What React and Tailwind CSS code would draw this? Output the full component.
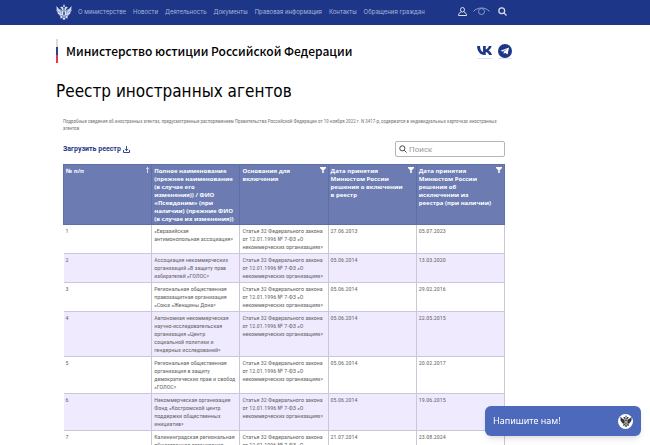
import { useState } from "react";

const navLinks = [
  "О министерстве",
  "Новости",
  "Деятельность",
  "Документы",
  "Правовая информация",
  "Контакты",
  "Обращения граждан",
];

const columns = [
  { title: "№ п/п", icon: "sort" },
  {
    title:
      "Полное наименование (прежнее наименование (в случае его\nизменения)) / ФИО «Псевдоним» (при наличии) (прежние ФИО (в случае их изменения))",
  },
  { title: "Основания для включения", icon: "filter" },
  {
    title: "Дата принятия Минюстом России решения о включении в реестр",
    icon: "filter",
  },
  {
    title:
      "Дата принятия Минюстом России решения об исключении из реестра (при наличии)",
    icon: "filter",
  },
];

const basis =
  "Статья 32 Федерального закона от 12.01.1996 № 7-ФЗ «О некоммерческих организациях»";

const agents = [
  {
    name: "«Евразийская\nантимонопольная ассоциация»",
    included: "27.06.2013",
    excluded: "05.07.2023",
  },
  {
    name: "Ассоциация некоммерческих организаций «В защиту прав избирателей «ГОЛОС»",
    included: "05.06.2014",
    excluded: "13.03.2020",
  },
  {
    name: "Региональная общественная правозащитная организация «Союз «Женщины Дона»",
    included: "05.06.2014",
    excluded: "29.02.2016",
  },
  {
    name: "Автономная некоммерческая научно-исследовательская организация «Центр\nсоциальной политики и гендерных исследований»",
    included: "05.06.2014",
    excluded: "22.05.2015",
  },
  {
    name: "Региональная общественная организация в защиту демократических прав и свобод «ГОЛОС»",
    included: "05.06.2014",
    excluded: "20.02.2017",
  },
  {
    name: "Некоммерческая организация Фонд «Костромской центр поддержки общественных инициатив»",
    included: "05.06.2014",
    excluded: "19.06.2015",
  },
  {
    name: "Калининградская региональная общественная организация",
    included: "21.07.2014",
    excluded: "23.08.2024",
  },
];

const Emblem = ({ className }) => (
  <svg viewBox="0 0 32 32" className={className} fill="currentColor" aria-hidden="true">
    <path d="M14 4l1-1V1h2v2l1 1-1 2h-2z" />
    <path d="M15 8c-1-2-3-3-5-2L8 8l3 .5c0 2 1 3 2 4l2 1zM17 8c1-2 3-3 5-2l2 2-3 .5c0 2-1 3-2 4l-2 1z" />
    <path d="M11 12C7 11 4 8 1 4c0 3 0 5 1 7l-1 0c0 3 1 5 3 6l-1 1c1 2 3 3 4 3l0 2c2 1 4 0 5-1zM21 12c4-1 7-4 10-8 0 3 0 5-1 7l1 0c0 3-1 5-3 6l1 1c-1 2-3 3-4 3l0 2c-2 1-4 0-5-1z" />
    <path
      fillRule="evenodd"
      d="M12 13h8v8c0 2-2 4-4 5-2-1-4-3-4-5zm2 2v5c0 2 1 3 2 4 1-1 2-2 2-4v-5z"
    />
    <path d="M15.400 15h1.200v9h-1.200zM11 23l3 3-2 2-3 1-1-1 2-2-2-1zM21 23l-3 3 2 2 3 1 1-1-2-2 2-1zM14 27h4l1 3-3 2-3-2z" />
    <path
      d="M4 8l7 8M2 13l9 6M28 8l-7 8M30 13l-9 6"
      stroke="#1d3687"
      strokeWidth=".8"
      fill="none"
    />
  </svg>
);

const UserIcon = () => (
  <svg viewBox="0 0 18 18" className="size-[9px]" fill="none" stroke="currentColor" strokeWidth="2">
    <ellipse cx="9" cy="5.500" rx="4" ry="4.500" />
    <path d="M6 10c-3 1.500-5 3-5 7h16c0-4-2-5.500-5-7" />
  </svg>
);

const EyeIcon = () => (
  <svg viewBox="0 0 34 18" className="h-[9px] w-[17px]" fill="none" stroke="currentColor" strokeWidth="2">
    <path d="M1 9C5 4 11 2 17 2s12 2 16 7" />
    <circle cx="17" cy="9" r="6" />
  </svg>
);

const SearchIcon = ({ className, strokeWidth = 2.5 }) => (
  <svg viewBox="0 0 18 18" className={className} fill="none" stroke="currentColor" strokeWidth={strokeWidth}>
    <circle cx="7.500" cy="7.500" r="5.800" />
    <path d="M11.800 11.800L17 17" />
  </svg>
);

const DownloadIcon = () => (
  <svg viewBox="0 0 14 14" className="size-[7px]" fill="none" stroke="currentColor" strokeWidth="1.800">
    <path d="M1 8v5h12V8M7 0v9M3.500 5.800L7 9.300l3.500-3.500" />
  </svg>
);

const FilterIcon = () => (
  <svg viewBox="0 0 12 12" className="size-[6px]" fill="currentColor">
    <path d="M0 0h12v2L7.500 6.500V12h-3V6.500L0 2z" />
  </svg>
);

const SortIcon = () => (
  <svg viewBox="0 0 6 12" className="h-[6px] w-[3px]" fill="none" stroke="currentColor" strokeWidth="1.500">
    <path d="M3 12V1M.5 3.500L3 1l2.500 2.500" />
  </svg>
);

const VkIcon = () => (
  <svg viewBox="0 0 30 18" className="h-[9px] w-[15px]" fill="currentColor">
    <path d="M16.300 18C6.200 18 .4 11.300.2 0h5.900c.2 8.300 3.400 11.200 6 11.900V0h5.400v6.800c2.700-.3 5.400-3.300 6.300-6.800h5.400c-.8 4.500-4.100 7.600-6.300 9 2.200 1.100 5.800 4 7.100 9h-5.900c-1.100-3.300-3.700-5.600-6.600-6V18z" />
  </svg>
);

const TelegramIcon = () => (
  <svg viewBox="0 0 28 28" className="size-[14px]">
    <circle cx="14" cy="14" r="14" fill="#1d3687" />
    <path fill="#fff" d="M5 13.500L22 7l-2.800 14-5-3.600-2.600 2.500-.4-4.300 7.500-6.200-9.300 5.500z" />
  </svg>
);

const Header = () => (
  <header className="bg-[#1d3687] h-[25px] pl-14 pr-[143px] pb-[2px] flex items-center justify-between text-[#a9b5db]">
    <div className="flex items-center">
      <a href="#" aria-label="Главная" className="text-[#dbe1f2]">
        <Emblem className="size-4" />
      </a>
      <nav className="flex gap-[7px] ml-[6px] whitespace-nowrap font-['Inter',sans-serif] text-[6px] leading-none">
        {navLinks.map((link) => (
          <a key={link} href="#">
            {link}
          </a>
        ))}
      </nav>
    </div>
    <div className="flex items-center gap-[6px]">
      <button type="button" aria-label="Личный кабинет" className="text-[#dbe1f2]">
        <UserIcon />
      </button>
      <button type="button" aria-label="Версия для слабовидящих" className="text-[#8c9ccd]">
        <EyeIcon />
      </button>
      <button type="button" aria-label="Поиск по сайту" className="ml-[2px] text-[#dbe1f2]">
        <SearchIcon className="size-[9px]" />
      </button>
    </div>
  </header>
);

const AgentsTable = ({ rows }) => (
  <table className="w-full table-fixed border-collapse whitespace-pre-line text-left font-['Roboto_Condensed',Roboto,sans-serif] text-[6px] leading-[8px]">
    <thead className="bg-[#6c7bb1] text-white font-['Open_Sans',sans-serif]">
      <tr>
        {columns.map((col) => (
          <th key={col.title} className="border border-[#5f6ea6] px-[2px] pt-[2px] pb-[1px] align-top font-bold">
            <div className="flex justify-between gap-[3px]">
              <span>{col.title}</span>
              {col.icon && (
                <button type="button" aria-label={col.icon} className="self-start">
                  {col.icon === "sort" ? <SortIcon /> : <FilterIcon />}
                </button>
              )}
            </div>
          </th>
        ))}
      </tr>
    </thead>
    <tbody className="text-[#666]">
      {rows.map((row, i) => (
        <tr key={row.name} className="even:bg-[#efeafe]">
          {[i + 1, row.name, basis, row.included, row.excluded].map((cell, j) => (
            <td key={j} className="border border-[#c9c7d8] first:border-l-0 px-[2px] py-[2px] align-top">
              {cell}
            </td>
          ))}
        </tr>
      ))}
    </tbody>
  </table>
);

const App = () => {
  const [query, setQuery] = useState("");

  const rows = agents.filter((a) => a.name.toLowerCase().includes(query.toLowerCase()));

  return (
    <div className="h-screen overflow-hidden bg-white font-['Roboto',sans-serif] text-black">
      <Header />
      <main className="pl-14 pr-[138px]">
        <div className="mt-[14px] flex items-center justify-between">
          <div className="flex items-center gap-2">
            <div className="w-[2px] h-6 flex flex-col">
              <span className="flex-1 bg-[#dcdcdc]" />
              <span className="flex-1 bg-[#2f4488]" />
              <span className="flex-1 bg-[#e8384f]" />
            </div>
            <p className="font-['Noto_Sans_CJK_SC',sans-serif] font-medium text-[12px] leading-6">
              Министерство юстиции Российской Федерации
            </p>
          </div>
          <div className="flex items-center gap-[6px] text-[#1d3687]">
            <a href="#" aria-label="ВКонтакте" className="flex h-4 items-center border-b border-[#dfe3f0]">
              <VkIcon />
            </a>
            <a href="#" aria-label="Telegram" className="flex h-4 items-center border-b border-[#dfe3f0]">
              <TelegramIcon />
            </a>
          </div>
        </div>

        <h1 className="mt-[14px] font-['DejaVu_Sans_Condensed',sans-serif] text-[17px] leading-7">
          Реестр иностранных агентов
        </h1>

        <div className="pl-[7px]">
          <p className="mt-[13px] font-['Roboto_Condensed',Roboto,sans-serif] text-[5px] leading-[7px] text-[#777]">
            Подробные сведения об иностранных агентах, предусмотренные распоряжением Правительства
            Российской Федерации от 10 ноября 2022 г. N 3417-р, содержатся в индивидуальных карточках
            иностранных агентов
          </p>

          <div className="pr-[7px]">
            <div className="mt-[9px] mb-[7px] flex items-center justify-between">
              <a href="#" className="flex items-center gap-[2px] text-[7px] leading-none font-bold text-[#1d3687]">
                Загрузить реестр
                <DownloadIcon />
              </a>
              <label className="flex w-[110px] h-4 items-center gap-[2px] border border-[#b5b5b5] rounded-[2px] px-[3px] text-[#333]">
                <SearchIcon className="size-2 shrink-0" strokeWidth={2} />
                <input
                  type="text"
                  value={query}
                  onChange={(e) => setQuery(e.target.value)}
                  placeholder="Поиск"
                  aria-label="Поиск"
                  className="w-full min-w-0 text-[8px] leading-none outline-none placeholder:text-[#999]"
                />
              </label>
            </div>
            <AgentsTable rows={rows} />
          </div>
        </div>
      </main>

      <button
        type="button"
        className="fixed right-[9px] bottom-[9px] flex h-[30px] w-[156px] items-center justify-between rounded-md bg-[#4c69bb] px-2 text-white shadow-md"
      >
        <span className="font-['Noto_Sans',sans-serif] text-[9px]">Напишите нам!</span>
        <span className="flex size-[15px] items-center justify-center rounded-full bg-white text-[#333]">
          <Emblem className="size-3" />
        </span>
      </button>
    </div>
  );
};

export default App;
